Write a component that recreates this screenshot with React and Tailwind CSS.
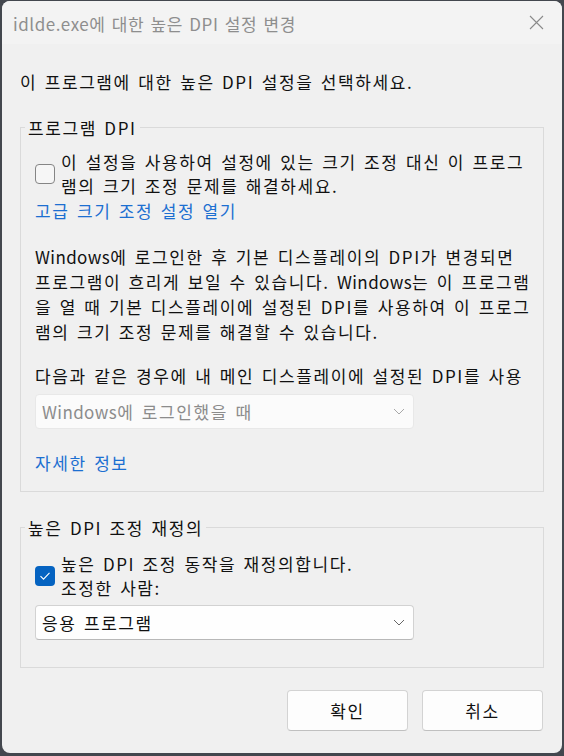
import React from 'react';

const Chevron = ({ color }) => (
  <svg width="12" height="7" viewBox="0 0 12 7" fill="none">
    <path d="M1 1l5 5 5-5" stroke={color} strokeWidth="1" />
  </svg>
);

const Checkbox = ({ checked }) =>
  checked ? (
    <div className="w-[20px] h-[20px] shrink-0 rounded-[4px] bg-[#0563c1] flex items-center justify-center">
      <svg width="12" height="10" viewBox="0 0 12 10" fill="none">
        <path d="M1.5 5.2l3 3 6-6.4" stroke="#ffffff" strokeWidth="1.1" />
      </svg>
    </div>
  ) : (
    <div className="w-[20px] h-[20px] shrink-0 rounded-[4px] border border-[#858585] bg-[#f6f6f6]" />
  );

const Select = ({ value, disabled }) => (
  <div
    className={`w-[379px] h-[35px] rounded-[4px] border flex items-center justify-between pl-[6px] pr-[8px] ${
      disabled
        ? 'bg-[#fbfbfb] border-[#e8e8e8] text-[#8c8c8c]'
        : 'bg-[#fefefe] border-[#d2d2d2] border-b-[#b8b8b8] text-[#111]'
    }`}
  >
    <span>{value}</span>
    <Chevron color={disabled ? '#a8a8a8' : '#666666'} />
  </div>
);

const Button = ({ children }) => (
  <button className="w-[121px] h-[41px] rounded-[4px] border border-[#d3d3d3] border-b-[#c0c0c0] bg-[#fdfdfd] text-[#111] flex items-center justify-center">
    {children}
  </button>
);

// latin runs are spaced tighter than hangul
const L = ({ children }) => <span className="tracking-[0.4px]">{children}</span>;

export default function App() {
  return (
    <div className="min-h-screen bg-[#43474e] pt-[1px] pl-[2px] font-['Noto_Sans_CJK_KR',sans-serif] text-[17px] tracking-[1.6px] [word-spacing:2px]">
      <div className="w-[560px] h-[752px] rounded-[8px] overflow-hidden bg-[#f0f0f0] flex flex-col">
        {/* title bar */}
        <div className="h-[43px] shrink-0 bg-[#f3f3f3] flex items-center justify-between pl-[11px] pr-[18px]">
          <span className="text-[#8e8e8e] leading-[25px] mt-[1px] tracking-[0.55px]">idlde.exe에 대한 높은 DPI 설정 변경</span>
          <svg width="15" height="15" viewBox="0 0 15 15" fill="none">
            <path d="M1 1l13 13M14 1L1 14" stroke="#8a8a8a" strokeWidth="1.1" />
          </svg>
        </div>

        <div className="px-[18px] text-[#111] leading-[25px]">
          <p className="mt-[25px]">이 프로그램에 대한 높은 DPI 설정을 선택하세요.</p>

          <fieldset className="mt-[21px] min-w-0 w-full border border-[#dadada] px-[14px] pb-[16px]">
            <legend className="ml-[-10px] px-[3px] leading-[25px]">프로그램 DPI</legend>
            <div className="mt-[10px] flex items-center gap-[6px]">
              <Checkbox />
              <div className="leading-[24px] whitespace-nowrap">
                이 설정을 사용하여 설정에 있는 크기 조정 대신 이 프로그
                <br />
                램의 크기 조정 문제를 해결하세요.
              </div>
            </div>
            <div className="mt-[1px] leading-[24px] text-[#1c6fd1]">고급 크기 조정 설정 열기</div>

            <p className="mt-[21px] whitespace-nowrap">
              <L>Windows</L>에 로그인한 후 기본 디스플레이의 DPI가 변경되면
              <br />
              프로그램이 흐리게 보일 수 있습니다. <L>Windows</L>는 이 프로그램
              <br />
              을 열 때 기본 디스플레이에 설정된 DPI를 사용하여 이 프로그
              <br />
              램의 크기 조정 문제를 해결할 수 있습니다.
            </p>

            <p className="mt-[19px] whitespace-nowrap">다음과 같은 경우에 내 메인 디스플레이에 설정된 DPI를 사용</p>
            <div className="mt-[6px]">
              <Select value={<><L>Windows</L>에 로그인했을 때</>} disabled />
            </div>
            <div className="mt-[21px] text-[#1c6fd1]">자세한 정보</div>
          </fieldset>

          <fieldset className="mt-[23px] min-w-0 w-full border border-[#dadada] px-[14px] pb-[27px]">
            <legend className="ml-[-10px] px-[3px] leading-[25px]">높은 DPI 조정 재정의</legend>
            <div className="mt-[12px] flex items-center gap-[6px]">
              <Checkbox checked />
              <div className="leading-[24px] whitespace-nowrap">
                높은 DPI 조정 동작을 재정의합니다.
                <br />
                조정한 사람:
              </div>
            </div>
            <div className="mt-[5px]">
              <Select value="응용 프로그램" />
            </div>
          </fieldset>

          <div className="mt-[22px] flex justify-end gap-[14px] pr-[1px]">
            <Button>확인</Button>
            <Button>취소</Button>
          </div>
        </div>
      </div>
    </div>
  );
}
